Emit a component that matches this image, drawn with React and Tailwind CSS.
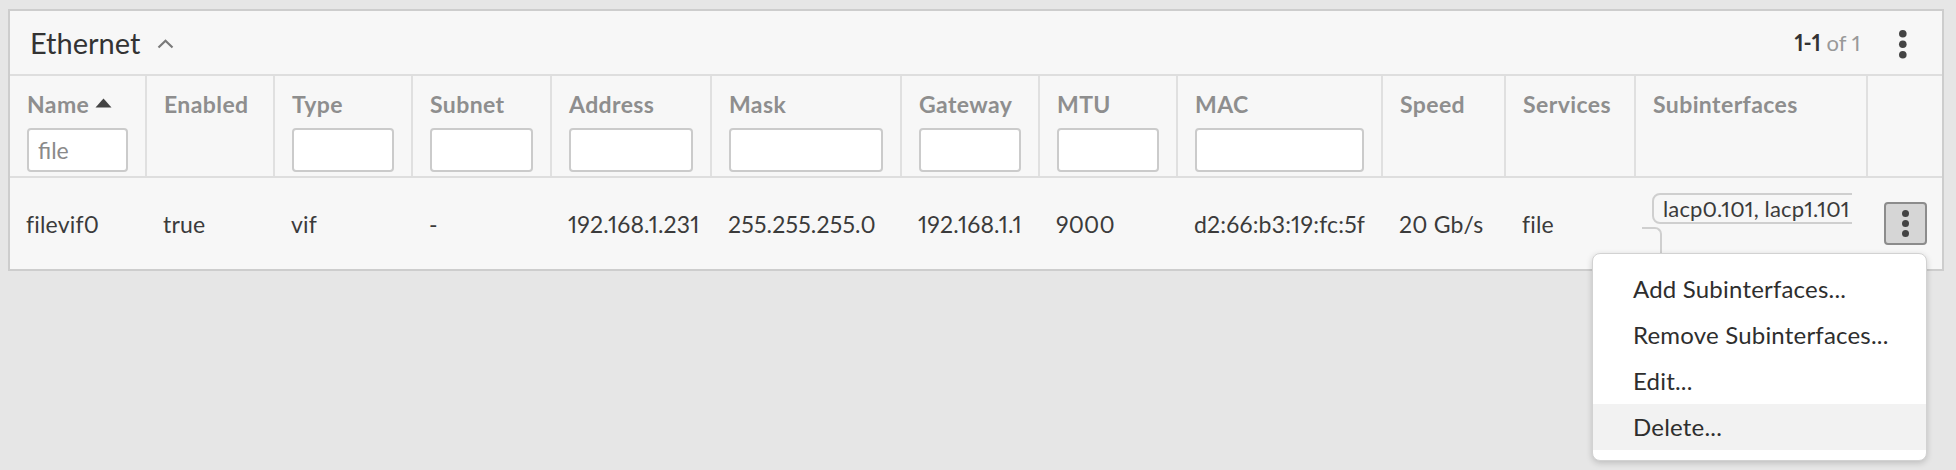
import React from "react";

const COLS =
  "grid grid-cols-[137px_128px_138px_139px_160px_190px_138px_138px_205px_123px_130px_232px_74px]";

const headers = [
  { label: "Name", sort: true, input: "file" },
  { label: "Enabled" },
  { label: "Type", input: "" },
  { label: "Subnet", input: "" },
  { label: "Address", input: "" },
  { label: "Mask", input: "" },
  { label: "Gateway", input: "" },
  { label: "MTU", input: "" },
  { label: "MAC", input: "" },
  { label: "Speed" },
  { label: "Services" },
  { label: "Subinterfaces" },
  { label: "" },
];

const row = [
  "filevif0",
  "true",
  "vif",
  "-",
  "192.168.1.231",
  "255.255.255.0",
  "192.168.1.1",
  "9000",
  "d2:66:b3:19:fc:5f",
  "20 Gb/s",
  "file",
];

function Dots({ r = 3.6, gap = 10.5, color = "#444" }) {
  const h = gap * 2 + r * 2 + 2;
  return (
    <svg width={r * 2 + 2} height={h} viewBox={`0 0 ${r * 2 + 2} ${h}`}>
      {[0, 1, 2].map((i) => (
        <circle key={i} cx={r + 1} cy={r + 1 + i * gap} r={r} fill={color} />
      ))}
    </svg>
  );
}

export default function App() {
  return (
    <div className="relative h-[470px] w-[1956px] overflow-hidden bg-[#e6e6e6] pl-[8px] pt-[9px] font-['Lato',sans-serif] proportional-nums">
      <div className="w-[1936px] border-2 border-[#cdcdcd] bg-[#f7f7f7]">
        {/* Title bar */}
        <div className="flex h-[65px] items-center justify-between border-b-2 border-[#dedede] pl-[20px] pr-[34px]">
          <div className="flex items-center">
            <span className="text-[29px] leading-[34px] text-[#333]">Ethernet</span>
            <svg className="ml-[17px] mt-[3px]" width="17" height="10" viewBox="0 0 17 10">
              <path d="M1.5 8.5 L8.5 1.8 L15.5 8.5" fill="none" stroke="#7a7a7a" strokeWidth="2.2" />
            </svg>
          </div>
          <div className="flex items-center">
            <span className="text-[22px] leading-[26px] text-[#999]">
              <span className="font-bold text-[#333]">1-1</span> of 1
            </span>
            <div className="ml-[38px] mt-[4px]">
              <Dots r={3.8} gap={10.5} color="#444" />
            </div>
          </div>
        </div>

        {/* Header row */}
        <div className={`${COLS} border-b-2 border-[#dedede]`}>
          {headers.map((h, i) => (
            <div
              key={i}
              className={`px-[17px] pt-[15px] pb-[4px] ${
                i < headers.length - 1 ? "border-r-2 border-[#e0e0e0]" : ""
              }`}
            >
              <div className="flex h-[26px] items-center whitespace-nowrap text-[23px] font-bold leading-[26px] tracking-[0.4px] text-[#8e8e8e]">
                {h.label}
                {h.sort && (
                  <svg className="ml-[6px] mb-[3px]" width="17" height="10" viewBox="0 0 17 10">
                    <path d="M0.5 9.5 L8.5 0.5 L16.5 9.5 Z" fill="#444" />
                  </svg>
                )}
              </div>
              {h.input !== undefined ? (
                <input
                  readOnly
                  defaultValue={h.input}
                  className="mt-[11px] block h-[44px] w-full rounded-[4px] border-2 border-[#cbcbcb] bg-white px-[9px] text-[23px] text-[#8a8a8a] outline-none"
                />
              ) : (
                <div className="mt-[11px] h-[44px]" />
              )}
            </div>
          ))}
        </div>

        {/* Data row */}
        <div className={`${COLS} h-[91px] items-center`}>
          {row.map((v, i) => (
            <div key={i} className="whitespace-nowrap px-[16px] text-[23px] leading-[26px] tracking-[0.2px] text-[#3b3b3b]">
              {v}
            </div>
          ))}
          <div className="relative h-full px-[16px] pt-[15px]">
            <div className="w-[200px] overflow-hidden">
              <div className="flex h-[31px] w-[260px] items-center rounded-[8px] border-2 border-[#cfcfcf] pl-[9px] text-[22px] leading-[26px] tracking-[0.15px] whitespace-nowrap text-[#3b3b3b]">
                lacp0.101, lacp1.101
              </div>
            </div>
            <div className="absolute left-[6px] top-[49px] h-[40px] w-[20px] rounded-tr-[7px] border-r-2 border-t-2 border-[#cfcfcf]" />
          </div>
          <div className="px-[16px]">
            <div className="flex h-[43px] w-[43px] items-center justify-center rounded-[4px] border-2 border-[#8c8c8c] bg-[#d6d6d6]">
              <Dots r={3.5} gap={10} color="#444" />
            </div>
          </div>
        </div>
      </div>

      {/* Dropdown menu */}
      <div className="absolute left-[1592px] top-[253px] w-[335px] rounded-[8px] border border-[#d2d2d2] bg-white pt-[12px] pb-[10px] shadow-[0_2px_6px_rgba(0,0,0,0.18)]">
        {["Add Subinterfaces...", "Remove Subinterfaces...", "Edit...", "Delete..."].map((t, i) => (
          <div
            key={t}
            className={`flex h-[46px] items-center pl-[40px] text-[24px] leading-[28px] tracking-[0.2px] text-[#2e2e2e] ${
              i === 3 ? "bg-[#f2f2f2]" : ""
            }`}
          >
            {t}
          </div>
        ))}
      </div>
    </div>
  );
}
